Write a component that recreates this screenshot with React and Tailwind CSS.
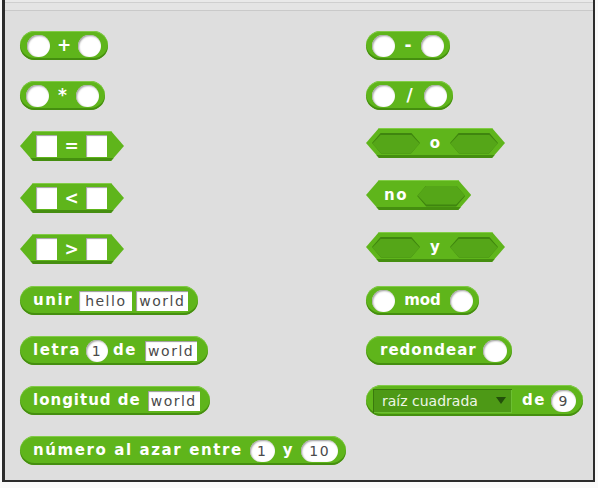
import React from "react";

// Scratch-style "Operators" palette: reporter (rounded) and predicate (hexagonal) blocks.

const labelBase =
  "font-['DejaVu_Sans',sans-serif] font-bold text-[15px] leading-none text-white whitespace-nowrap";
const label = `${labelBase} tracking-[1.6px]`;
const labelTight = `${labelBase} tracking-[1px]`;
const inputText =
  "font-['DejaVu_Sans',sans-serif] text-[14px] leading-none tracking-[1.5px] text-[#4a4a4a] whitespace-nowrap";

function Reporter({ children, className = "" }) {
  return (
    <div
      className={`inline-flex h-[29px] items-center rounded-full bg-[#5fb51b] shadow-[inset_0_1px_0_#82cc47,inset_0_-2px_0_#458e10] ${className}`}
    >
      {children}
    </div>
  );
}

function Predicate({ children, className = "" }) {
  return (
    <div
      className={`inline-flex h-[30px] items-center bg-[#5fb51b] shadow-[inset_0_1px_0_#82cc47,inset_0_-3px_0_#458e10] [clip-path:polygon(13px_0,calc(100%_-_13px)_0,100%_50%,calc(100%_-_13px)_100%,13px_100%,0_50%)] ${className}`}
    >
      {children}
    </div>
  );
}

function NumSlot({ children, className = "w-[23px]" }) {
  return (
    <div
      className={`flex h-[22px] shrink-0 items-center justify-center rounded-full bg-white shadow-[inset_1px_1px_2px_#9a9a9a] ${className}`}
    >
      {children && <span className={`${inputText} tracking-[0.5px]`}>{children}</span>}
    </div>
  );
}

function BoxSlot() {
  return <div className="h-[22px] w-[21px] shrink-0 bg-white shadow-[inset_1px_1px_1px_#a0a0a0]" />;
}

function TextSlot({ children, className }) {
  return (
    <div
      className={`flex h-[20px] shrink-0 items-center justify-center bg-white shadow-[inset_1px_1px_1px_#9a9a9a] ${className}`}
    >
      <span className={inputText}>{children}</span>
    </div>
  );
}

function BoolSlot() {
  return (
    <div className="h-[21px] w-[48px] shrink-0 bg-[#3f850f] [clip-path:polygon(9px_0,calc(100%_-_9px)_0,100%_50%,calc(100%_-_9px)_100%,9px_100%,0_50%)]">
      <div className="mt-[2px] h-[19px] w-[48px] bg-[#55a618] [clip-path:polygon(9px_0,calc(100%_-_9px)_0,100%_50%,calc(100%_-_9px)_100%,9px_100%,0_50%)]" />
    </div>
  );
}

function Mid({ w, children, size = "text-[17px]" }) {
  return (
    <span
      className={`flex justify-center font-['DejaVu_Sans',sans-serif] font-bold leading-none text-white ${size} ${w}`}
    >
      {children}
    </span>
  );
}

export default function App() {
  return (
    <div className="h-[488px] w-[598px] bg-[#fafafa]">
      <div className="ml-[2px] h-[482px] w-[593px] border-b-[2px] border-l-[3px] border-r-[2px] border-[#2c2c2c] bg-[#dedede]">
        {/* header strip */}
        <div className="h-[11px] border-b border-[#c9c9c9] bg-[#e4e4e4]">
          <div className="h-[3px] border-b border-[#cfcfcf] bg-[#e9e9e9]" />
        </div>

        <div className="grid grid-cols-[346px_1fr] grid-rows-[50px_50px_52px_51px_52px_50px_50px_50px_50px] pl-[15px] pt-[20px]">
          {/* left column */}
          <div className="col-start-1 row-start-1">
            <Reporter className="px-[7px]">
              <NumSlot />
              <Mid w="w-[28px]">+</Mid>
              <NumSlot />
            </Reporter>
          </div>
          <div className="col-start-1 row-start-2">
            <Reporter className="px-[6px]">
              <NumSlot />
              <Mid w="w-[27px]">*</Mid>
              <NumSlot />
            </Reporter>
          </div>
          <div className="col-start-1 row-start-3">
            <Predicate className="pl-[16px] pr-[17px]">
              <BoxSlot />
              <Mid w="w-[29px]">=</Mid>
              <BoxSlot />
            </Predicate>
          </div>
          <div className="col-start-1 row-start-4">
            <Predicate className="pl-[16px] pr-[17px]">
              <BoxSlot />
              <Mid w="w-[29px]">&lt;</Mid>
              <BoxSlot />
            </Predicate>
          </div>
          <div className="col-start-1 row-start-5">
            <Predicate className="pl-[16px] pr-[17px]">
              <BoxSlot />
              <Mid w="w-[29px]">&gt;</Mid>
              <BoxSlot />
            </Predicate>
          </div>
          <div className="col-start-1 row-start-6">
            <Reporter className="pl-[13px] pr-[10px]">
              <span className={label}>unir</span>
              <TextSlot className="ml-[6px] w-[53px]">hello</TextSlot>
              <TextSlot className="ml-[4px] w-[52px]">world</TextSlot>
            </Reporter>
          </div>
          <div className="col-start-1 row-start-7">
            <Reporter className="pl-[13px] pr-[11px]">
              <span className={label}>letra</span>
              <NumSlot className="ml-[5px] w-[22px]">1</NumSlot>
              <span className={`${label} ml-[5px]`}>de</span>
              <TextSlot className="ml-[8px] w-[52px]">world</TextSlot>
            </Reporter>
          </div>
          <div className="col-start-1 row-start-8">
            <Reporter className="pl-[13px] pr-[10px]">
              <span className={labelTight}>longitud de</span>
              <TextSlot className="ml-[7px] w-[52px]">world</TextSlot>
            </Reporter>
          </div>
          <div className="col-start-1 row-start-9">
            <Reporter className="pl-[13px] pr-[8px]">
              <span className={label}>número al azar entre</span>
              <NumSlot className="ml-[7px] w-[25px]">1</NumSlot>
              <span className={`${label} ml-[8px]`}>y</span>
              <NumSlot className="ml-[7px] w-[37px]">10</NumSlot>
            </Reporter>
          </div>

          {/* right column */}
          <div className="col-start-2 row-start-1">
            <Reporter className="px-[6px]">
              <NumSlot />
              <Mid w="w-[26px]">-</Mid>
              <NumSlot />
            </Reporter>
          </div>
          <div className="col-start-2 row-start-2">
            <Reporter className="px-[6px]">
              <NumSlot />
              <Mid w="w-[29px]">/</Mid>
              <NumSlot />
            </Reporter>
          </div>
          <div className="col-start-2 row-start-3 -mt-[3px]">
            <Predicate className="pl-[6px] pr-[7px]">
              <BoolSlot />
              <Mid w="w-[30px]" size="text-[15px]">o</Mid>
              <BoolSlot />
            </Predicate>
          </div>
          <div className="col-start-2 row-start-4 -mt-[3px]">
            <Predicate className="h-[29px] pl-[18px] pr-[6px]">
              <span className={label}>no</span>
              <div className="ml-[9px]">
                <BoolSlot />
              </div>
            </Predicate>
          </div>
          <div className="col-start-2 row-start-5 -mt-[2px]">
            <Predicate className="pl-[6px] pr-[7px]">
              <BoolSlot />
              <Mid w="w-[30px]" size="text-[15px]">y</Mid>
              <BoolSlot />
            </Predicate>
          </div>
          <div className="col-start-2 row-start-6">
            <Reporter className="px-[6px]">
              <NumSlot />
              <Mid w="w-[55px]" size="text-[15px]">mod</Mid>
              <NumSlot />
            </Reporter>
          </div>
          <div className="col-start-2 row-start-7">
            <Reporter className="pl-[14px] pr-[5px]">
              <span className={labelTight}>redondear</span>
              <NumSlot className="ml-[6px] w-[24px]" />
            </Reporter>
          </div>
          <div className="col-start-2 row-start-8 -mt-[1px]">
            <Reporter className="h-[31px] pl-[7px] pr-[7px]">
              <div className="flex h-[24px] w-[139px] items-center justify-between bg-[#4d9916] pl-[9px] pr-[6px] shadow-[inset_1px_1px_0_#3a790d,inset_-1px_-1px_0_#6cbf33]">
                <span className="font-['DejaVu_Sans',sans-serif] text-[14px] leading-none text-[#eef6e6] whitespace-nowrap">
                  raíz cuadrada
                </span>
                <span className="h-0 w-0 border-l-[5px] border-r-[5px] border-t-[7px] border-l-transparent border-r-transparent border-t-[#23500a]" />
              </div>
              <span className={`${label} ml-[10px]`}>de</span>
              <NumSlot className="ml-[5px] w-[25px]">9</NumSlot>
            </Reporter>
          </div>
        </div>
      </div>
    </div>
  );
}
